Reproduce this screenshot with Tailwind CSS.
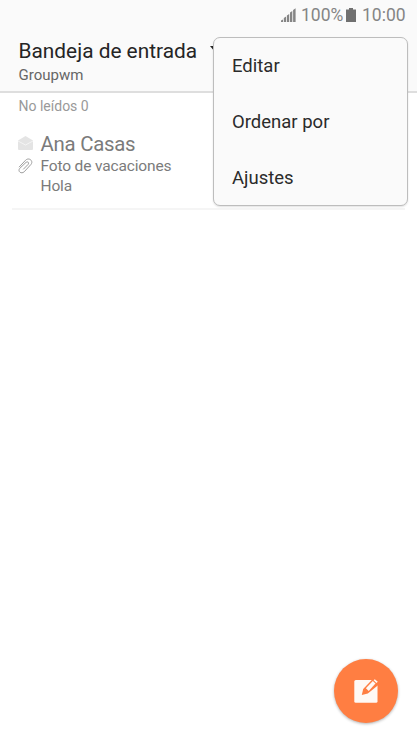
<!DOCTYPE html>
<html lang="es">
<head>
<meta charset="utf-8">
<title>Bandeja de entrada</title>
<script src="https://cdn.jsdelivr.net/npm/@tailwindcss/browser@4"></script>
</head>
<body class="relative h-[742px] w-[417px] overflow-hidden bg-white font-['Roboto',sans-serif]">
<header class="h-[93px] border-b-2 border-[#dedede] bg-[#fafafa]">
  <div class="flex h-[30px] items-center justify-end pr-[12px] text-[17.5px] leading-[30px] text-[#858585]">
    <svg class="mr-[5px] h-[14px] w-[15px]" viewBox="0 0 15 14" fill="#858585"><path d="M0 12.500l2-1V14H0zM2.800 10l2.300-1.500V14H2.800zM5.900 7.500L8.200 6v8H5.900zM9 4.500L11.300 3v11H9zM12.100 2L14.600.3V14h-2.500z"/></svg>
    <span class="w-[43px] whitespace-nowrap">100%</span>
    <svg class="mr-[6px] ml-[2px] h-[14px] w-[10px]" viewBox="0 0 10 14" fill="#707070"><path d="M3 0h4v1.500h3V14H0V1.500h3z"/></svg>
    <span class="w-[43px] whitespace-nowrap">10:00</span>
  </div>
  <div class="flex h-[36px] items-center gap-[12.5px] pt-[6px] pl-[18.5px]">
    <h1 class="w-[179px] whitespace-nowrap text-[20.85px] leading-[30px] text-[#252525]">Bandeja de entrada</h1>
    <svg class="h-[6px] w-[10px] -translate-y-[2px]" viewBox="0 0 10 6" fill="#252525"><path d="M0 0h10L5 6z"/></svg>
  </div>
  <p class="pl-[18.5px] text-[15px] leading-[18px] text-[#666]">Groupwm</p>
</header>
<main>
  <p class="h-[36px] pt-[3px] pl-[18.5px] text-[14px] leading-[20px] text-[#999]">No leídos 0</p>
  <article class="ml-[12px] flex h-[81px] w-[393px] border-b-2 border-[#f5f5f5] pl-[6px]">
    <div class="w-[22.5px] pt-[7px]">
      <svg class="h-[15px] w-[16px]" viewBox="0 0 16 15" fill="#e4e4e4"><path d="M0 4.500L7.500 0 15 4.500V13q0 1-1 1H1q-1 0-1-1z"/><path d="M0 5l7.500 4L15 5" fill="none" stroke="#fff" stroke-width=".6"/></svg>
      <svg class="mt-[7px] h-[16px] w-[15px]" viewBox="0 0 15 16" fill="none" stroke="#999" stroke-width=".95" stroke-linecap="round"><path d="M1.300 8.900L7.600 2.200C10.800-1 15.800 2.800 13 6.400L6.200 13.800C3.400 16.300-.5 13.600 1.600 10.500L8.100 4.300C9.700 3 11.400 4.700 10.200 6.300L5.500 11.100"/></svg>
    </div>
    <div class="text-[#7b7b7b]">
      <h2 class="h-[28px] pt-[2px] text-[20.4px] leading-[26px] tracking-[-0.27px]">Ana Casas</h2>
      <p class="h-[20px] text-[15.5px] leading-[19px] tracking-[-0.15px]">Foto de vacaciones</p>
      <p class="text-[15.5px] leading-[19px] tracking-[-0.15px]">Hola</p>
    </div>
  </article>
</main>
<nav class="absolute top-[37px] left-[213px] flex h-[169px] w-[195px] flex-col rounded-[7px] border border-[#bdbdbd] bg-[#fafafa] pl-[18px] text-[18.5px] leading-[57px] text-[#2b2b2b] shadow-[0_1px_2px_rgba(0,0,0,0.12)]">
  <a class="h-[56px]">Editar</a>
  <a class="h-[56px]">Ordenar por</a>
  <a class="h-[56px]">Ajustes</a>
</nav>
<button aria-label="Redactar" class="absolute top-[659px] left-[334px] flex size-[64px] items-center justify-center rounded-full bg-[#ff7e42] shadow-[0_1px_3px_rgba(0,0,0,0.3)]">
  <svg class="h-[26px] w-[26px]" viewBox="0 0 26 26"><rect x="1.300" y="2" width="23.200" height="22.700" rx="1.500" fill="#fff9f5"/><path d="M8.800 17l1.400-6L20.200.5H26V6.500L14.800 15.500z" fill="#ff7e42"/><path d="M12.900 10.300L19.800 3.100l2.700 2.500-6.800 7.300z" fill="#fff9f5"/><path d="M20.600 2.300l1.200-1.100 3 2.500-1.400 1.200z" fill="#fff9f5"/></svg>
</button>
</body>
</html>
